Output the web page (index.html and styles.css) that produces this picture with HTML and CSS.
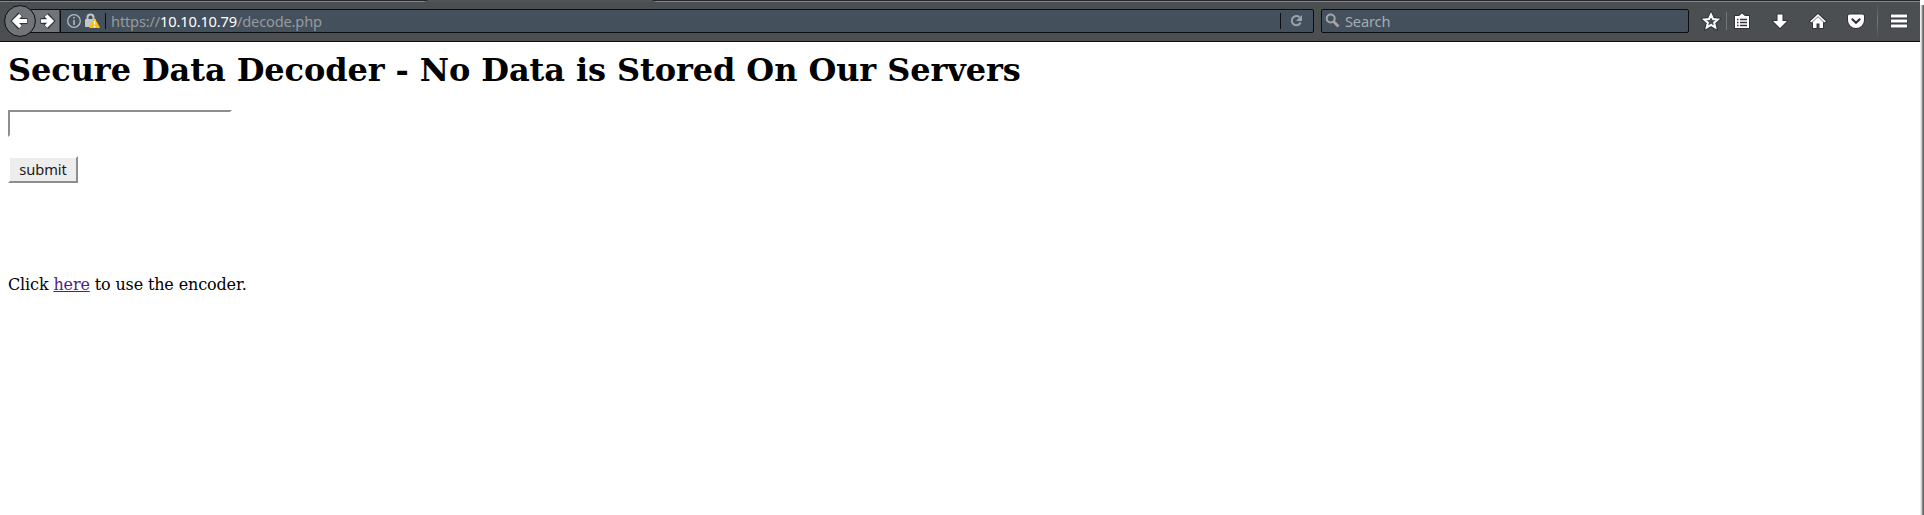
FILE: index.html
```
<!DOCTYPE html>
<html lang="en">
<head>
<meta charset="utf-8">
<title>Secure Data Decoder</title>
<link rel="stylesheet" href="styles.css">
</head>
<body>
<div class="window">
  <div class="browser">
    <header class="toolbar">
      <svg class="nav" width="60" height="33" viewBox="0 0 60 33">
        <path d="M30 4.5H60V27.5H30Z" fill="#717479" stroke="#0c0d0f"/>
        <circle cx="20" cy="16" r="15.4" fill="#717479" stroke="#0c0d0f"/>
        <path d="M20.5 9.500L14.500 16L20.500 22.500M14 16H27.500" fill="none" stroke="#303338" stroke-width="6"/>
        <path d="M20.500 10L14.500 16L20.500 22M15 16H27" fill="none" stroke="#fff" stroke-width="3.800"/>
        <path d="M46 10L51.500 16L46 22M40.500 16H51" fill="none" stroke="#303338" stroke-width="6"/>
        <path d="M46 10.500L51.500 16L46 21.500M41 16H51" fill="none" stroke="#fff" stroke-width="3.700"/>
      </svg>
      <div class="address">
        <svg class="identity" width="46" height="22" viewBox="0 0 46 22">
          <circle cx="13" cy="11" r="6.300" fill="none" stroke="#b4b9bf" stroke-width="1.300"/>
          <path d="M13 7V8.600M13 10V15" stroke="#b4b9bf" stroke-width="1.600"/>
          <path d="M26.500 10V7.500a3 3 0 0 1 6 0V10" fill="none" stroke="#c3c6ca" stroke-width="2"/>
          <rect x="24" y="9" width="11" height="8" rx="1" fill="#c3c6ca"/>
          <path d="M33.500 9.500L38 17.200H29Z" fill="#ffbf00" stroke="#ffbf00" stroke-width="1.600" stroke-linejoin="round"/>
          <path d="M33.500 11V14.500M33.500 15.800V17.300" stroke="#fff" stroke-width="1.600"/>
          <path d="M44.500 3V19" stroke="#0c0d0f"/>
        </svg>
        <span class="url">https://<b>10.10.10.79</b>/decode.php</span>
        <svg class="reload" width="33" height="22" viewBox="0 0 33 22">
          <path d="M.5 3V19" stroke="#0c0d0f"/>
          <path d="M19.500 7.200A4.600 4.600 0 1 0 20.600 12.500" fill="none" stroke="#97a3ae" stroke-width="2"/>
          <path d="M22 5V11H16Z" fill="#97a3ae"/>
        </svg>
      </div>
      <div class="search">
        <svg width="23" height="22" viewBox="0 0 23 22">
          <circle cx="8.700" cy="8.500" r="4" fill="none" stroke="#a5a5a5" stroke-width="2"/>
          <path d="M11.500 11.500L16.500 16.500" stroke="#a5a5a5" stroke-width="2.800"/>
        </svg>
        <span>Search</span>
      </div>
      <div class="actions">
        <svg class="icon" viewBox="0 0 20 20">
          <path d="M10 3.500L12 8L16.800 8.500L13.200 11.700L14.300 16.500L10 14L5.700 16.500L6.800 11.700L3.200 8.500L8 8Z" fill="none" stroke="#303338" stroke-width="4"/>
          <path d="M10 3.500L12 8L16.800 8.500L13.200 11.700L14.300 16.500L10 14L5.700 16.500L6.800 11.700L3.200 8.500L8 8Z" fill="#4b4f52" stroke="#fff" stroke-width="2"/>
        </svg>
        <i class="rule"></i>
        <svg class="icon" viewBox="0 0 20 20">
          <path d="M3 5H7L10 2.500L13 5H17V17H3Z" fill="#fff" stroke="#303338" stroke-width="2" stroke-linejoin="round" paint-order="stroke"/>
          <path d="M5 8.500H6.500M5 11.500H6.500M5 14.500H6.500M8 8.500H15M8 11.500H15M8 14.500H15" stroke="#303338" stroke-width="1.500"/>
        </svg>
        <svg class="icon arrow" viewBox="0 0 20 20">
          <path d="M7.500 3.500H12.500V10H17L10 17L3 10H7.500Z" fill="#fff" stroke="#303338" stroke-width="2" stroke-linejoin="round" paint-order="stroke"/>
        </svg>
        <svg class="icon home" viewBox="0 0 20 20">
          <path d="M10 3L18 10.500L16 11.500L15 10.500V17H11.500V12.500H8.500V17H5V10.500L4 11.500L2 10.500Z" fill="#fff" stroke="#303338" stroke-width="2" stroke-linejoin="round" paint-order="stroke"/>
          <path d="M4 11.300L10 5.700L16 11.300" fill="none" stroke="#72767a"/>
        </svg>
        <svg class="icon pocket" viewBox="0 0 20 20">
          <path d="M3.500 3.500H16.500Q18 3.500 18 5V9A8 8 0 0 1 2 9V5Q2 3.500 3.500 3.500Z" fill="#fff" stroke="#303338" stroke-width="2" paint-order="stroke"/>
          <path d="M5.800 7.700L10 11.700L14.200 7.700" fill="none" stroke="#303338" stroke-width="2.200"/>
        </svg>
        <i class="rule tall"></i>
        <svg class="icon menu" viewBox="0 0 20 20">
          <path d="M1.500 5H18.500M1.500 10H18.500M1.500 15H18.500" stroke="#303338" stroke-width="4.600"/>
          <path d="M2 5H18M2 10H18M2 15H18" stroke="#fff" stroke-width="3"/>
        </svg>
      </div>
      <svg class="tab" width="238" height="2" viewBox="0 0 238 2">
        <path d="M0 2Q5 2 7 0H231Q233 2 238 2Z" fill="#4f5355"/>
      </svg>
    </header>
    <main class="page">
      <h1>Secure Data Decoder - No Data is Stored On Our Servers</h1>
      <form>
        <input class="field" type="text" aria-label="Data">
        <button class="submit" type="button">submit</button>
      </form>
      <p>Click <a href="#">here</a> to use the encoder.</p>
    </main>
  </div>
  <div class="edge"></div>
</div>
</body>
</html>
```
FILE: styles.css
```
* { box-sizing: border-box; }
body {
  margin: 0;
  background: #fff;
  color: #000;
  font: 16px "DejaVu Serif", serif;
  overflow: hidden;
}
svg { display: block; flex: none; }
.window { display: flex; height: 515px; }
.browser { width: 1920px; }
.edge {
  width: 4px;
  margin-top: 5px;
  background: linear-gradient(90deg, #eee 1px, #ccc 1px 2px, #888 2px 3px, #666 3px);
}
.toolbar {
  position: relative;
  display: flex;
  align-items: flex-start;
  height: 42px;
  padding-top: 9px;
  border-bottom: 1px solid #0c0d0f;
  background: linear-gradient(#25262d 1px, #85858c 1px 2px, #4b4f52 2px);
  font: 14.67px "Noto Sans", sans-serif;
  letter-spacing: -0.18px;
}
.tab { position: absolute; left: 421px; top: 0; }
.nav { margin-top: -4px; }
.address, .search {
  display: flex;
  height: 24px;
  border: 1px solid #0c0d0f;
  background: #44505c;
  line-height: 23px;
}
.address { width: 1254px; border-radius: 0 2px 2px 0; }
.identity { margin-right: 4px; }
.url { flex: 1; color: #969ba0; }
.url b { color: #fff; font-weight: 400; }
.search {
  width: 368px;
  margin-left: 7px;
  border-radius: 2px;
  color: #a4acb4;
}
.actions {
  display: flex;
  align-items: center;
  height: 24px;
  margin-left: 12px;
}
.icon { width: 20px; height: 20px; }
.rule {
  width: 1px;
  height: 18px;
  margin: 0 5px;
  background: #72767a;
}
.arrow, .home, .pocket { margin-left: 18px; }
.tall {
  height: 36px;
  margin: 0 11px;
  background: linear-gradient(#4b4f52, #777b7e, #4b4f52);
}
.page { padding: 8px; }
h1 { margin: 0; font-size: 32px; line-height: 40px; letter-spacing: -0.09px; }
.field {
  display: block;
  width: 224px;
  height: 27px;
  margin-top: 20px;
  border: 2px solid;
  border-color: #8e8e8e #fff #fff #8e8e8e;
  outline: 0;
}
.submit {
  display: block;
  width: 70px;
  height: 27px;
  margin-top: 19px;
  padding: 0;
  border: 2px solid;
  border-color: #fff #8e8e8e #8e8e8e #fff;
  background: #ededed;
  color: #1a1a1a;
  font: 14.67px/23px "Noto Sans", sans-serif;
  letter-spacing: -0.1px;
}
p { margin: 92px 0 0; line-height: 20px; letter-spacing: -0.14px; }
a { color: #551a8b; }
```
